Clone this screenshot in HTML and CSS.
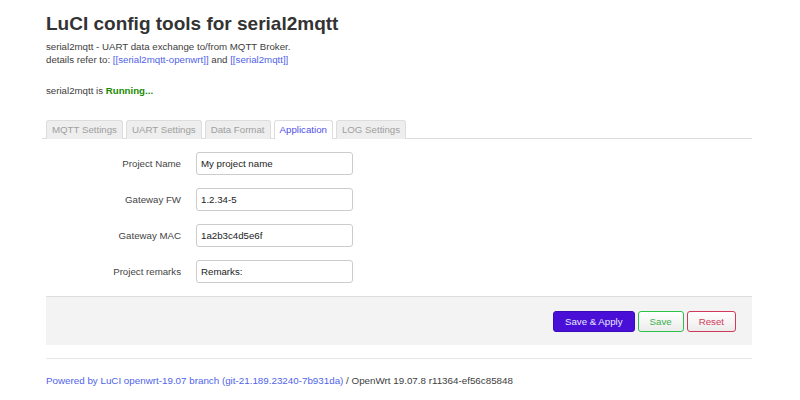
FILE: index.html
```html
<!DOCTYPE html>
<html>
<head>
<meta charset="utf-8">
<link rel="stylesheet" href="styles.css">
</head>
<body>
<div class="page">
  <h2 class="title">LuCI config tools for serial2mqtt</h2>
  <div class="desc">
    <div>serial2mqtt - UART data exchange to/from MQTT Broker.</div>
    <div>details refer to: <a href="#">[[serial2mqtt-openwrt]]</a> and <a href="#">[[serial2mqtt]]</a></div>
  </div>
  <div class="status">serial2mqtt is <b class="running">Running...</b></div>
  <ul class="tabs">
    <li class="tab">MQTT Settings</li>
    <li class="tab">UART Settings</li>
    <li class="tab">Data Format</li>
    <li class="tab active">Application</li>
    <li class="tab">LOG Settings</li>
  </ul>
  <div class="form">
    <div class="row"><label class="lbl">Project Name</label><input class="inp" value="My project name"></div>
    <div class="row"><label class="lbl">Gateway FW</label><input class="inp" value="1.2.34-5"></div>
    <div class="row"><label class="lbl">Gateway MAC</label><input class="inp" value="1a2b3c4d5e6f"></div>
    <div class="row"><label class="lbl">Project remarks</label><input class="inp" value="Remarks:"></div>
  </div>
  <div class="actions">
    <button class="btn apply">Save &amp; Apply</button>
    <button class="btn save">Save</button>
    <button class="btn reset">Reset</button>
  </div>
  <footer class="footer">
    <a href="#">Powered by LuCI openwrt-19.07 branch (git-21.189.23240-7b931da)</a> / OpenWrt 19.07.8 r11364-ef56c85848
  </footer>
</div>
</body>
</html>
```
FILE: styles.css
```css
html, body {
  margin: 0;
  padding: 0;
  background: #fff;
}
body {
  font-family: "Liberation Sans", Arial, sans-serif;
  font-size: 9.7px;
  color: #404040;
}
.page {
  width: 706px;
  margin-left: 46px;
}
.title {
  margin: 0;
  padding-top: 12px;
  font-size: 19px;
  line-height: 24px;
  font-weight: bold;
  color: #333;
}
.desc {
  margin-top: 4px;
  line-height: 13px;
}
a {
  color: #5064e8;
  text-decoration: none;
}
.status {
  margin-top: 18px;
  line-height: 13px;
}
.running {
  color: #1a8a00;
}
.tabs {
  list-style: none;
  margin: 23px 0 0 -4px;
  padding: 0 0 0 4px;
  display: flex;
  gap: 3px;
  border-bottom: 1px solid #ddd;
  height: 18px;
}
.tab {
  box-sizing: border-box;
  height: 19px;
  padding: 0 5px;
  line-height: 18px;
  font-size: 9.7px;
  color: #a0a0a0;
  background: #eee;
  border: 1px solid #ddd;
  border-bottom: none;
  border-radius: 3px 3px 0 0;
}
.tab.active {
  background: #fff;
  color: #5050e6;
}
.form {
  padding-top: 13px;
  display: flex;
  flex-direction: column;
  gap: 13px;
}
.row {
  display: flex;
  align-items: center;
  height: 23px;
}
.lbl {
  width: 135px;
  text-align: right;
  padding-right: 15px;
  color: #444;
}
.inp {
  box-sizing: border-box;
  width: 157px;
  height: 23px;
  margin: 0;
  padding: 0 4px;
  border: 1px solid #ccc;
  border-radius: 3px;
  font-family: "Liberation Sans", Arial, sans-serif;
  font-size: 9.7px;
  color: #222;
}
.actions {
  margin-top: 13px;
  height: 48px;
  background: #f3f3f3;
  border-top: 1px solid #ddd;
  display: flex;
  justify-content: flex-end;
  align-items: center;
  gap: 3px;
  padding-right: 16px;
}
.btn {
  box-sizing: border-box;
  height: 21px;
  padding: 0 11px;
  font-family: "Liberation Sans", Arial, sans-serif;
  font-size: 9.7px;
  border-radius: 3px;
  cursor: pointer;
  background: linear-gradient(#fff, #ececec);
}
.apply {
  background: #4a0fd6;
  border: 1px solid #3a0bb8;
  color: #e8e8ff;
}
.save {
  border: 1px solid #2cc24a;
  color: #3cb04a;
}
.reset {
  border: 1px solid #d03a5a;
  color: #d03a5a;
}
.footer {
  margin-top: 13px;
  border-top: 1px solid #e6e6e6;
  padding-top: 15px;
  line-height: 13px;
  font-size: 9.8px;
  color: #404040;
}
```
